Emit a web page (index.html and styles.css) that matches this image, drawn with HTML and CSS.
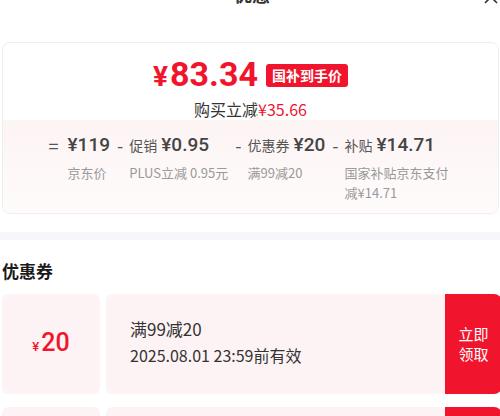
FILE: index.html
```html
<!DOCTYPE html>
<html>
  <head>
    <title>优惠</title>
    <link rel="stylesheet" href="styles.css">
  </head>
  <body>
    <header class="sheet-head">
      <h2>优惠</h2>
      <svg class="close" width="14" height="14" viewBox="0 0 14 14">
        <path d="M1 1 L13 13 M13 1 L1 13" stroke="#333" stroke-width="1.6" fill="none"/>
      </svg>
    </header>

    <div class="price-card">
      <div class="final">
        <div class="final-line">
          <span class="big-price"><span class="yen">¥</span>83.34</span>
          <span class="badge">国补到手价</span>
        </div>
        <div class="save">购买立减<span class="red">¥35.66</span></div>
      </div>
      <div class="breakdown">
        <div class="item">
          <span class="op">=</span>
          <div>
            <div class="top"><span class="amt">¥119</span></div>
            <div class="sub">京东价</div>
          </div>
        </div>
        <div class="item">
          <span class="op">-</span>
          <div>
            <div class="top"><span class="label">促销</span><span class="amt">¥0.95</span></div>
            <div class="sub">PLUS立减 0.95元</div>
          </div>
        </div>
        <div class="item">
          <span class="op">-</span>
          <div>
            <div class="top"><span class="label">优惠券</span><span class="amt">¥20</span></div>
            <div class="sub">满99减20</div>
          </div>
        </div>
        <div class="item">
          <span class="op">-</span>
          <div>
            <div class="top"><span class="label">补贴</span><span class="amt">¥14.71</span></div>
            <div class="sub wrap">国家补贴京东支付减¥14.71</div>
          </div>
        </div>
      </div>
    </div>

    <div class="divider"></div>

    <h3 class="section-title">优惠券</h3>

    <div class="coupon">
      <div class="coupon-value"><span class="yen">¥</span>20</div>
      <div class="coupon-info">
        <div class="rule">满99减20</div>
        <div class="expire">2025.08.01 23:59前有效</div>
      </div>
      <button class="get-btn">立即<br>领取</button>
    </div>
    <div class="coupon">
      <div class="coupon-value"><span class="yen">¥</span>10</div>
      <div class="coupon-info">
        <div class="rule">满59减10</div>
        <div class="expire">2025.08.01 23:59前有效</div>
      </div>
      <button class="get-btn">立即<br>领取</button>
    </div>
  </body>
</html>
```

FILE: styles.css
```css
* {
  margin: 0;
  padding: 0;
  box-sizing: border-box;
}

html, body {
  height: 100%;
  overflow: hidden;
}

body {
  font-family: 'Noto Sans CJK SC', 'Noto Sans', sans-serif;
  color: #333;
  background: #fff;
  padding-left: 2px;
  width: 502px;
}

.sheet-head {
  position: relative;
  height: 24px;
  margin-top: -18px;
  text-align: center;
}

.sheet-head h2 {
  font-size: 18px;
  line-height: 24px;
  font-weight: bold;
  color: #333;
}

.close {
  position: absolute;
  right: 4px;
  top: 8px;
}

.price-card {
  margin-top: 36px;
  width: 497px;
  border: 1px solid #eee;
  border-radius: 8px;
  overflow: hidden;
}

.final {
  padding-top: 12px;
  text-align: center;
}

.final-line {
  display: flex;
  align-items: center;
  justify-content: center;
  gap: 8px;
}

.big-price {
  font-family: 'Roboto', sans-serif;
  font-weight: bold;
  font-size: 34px;
  line-height: 38px;
  color: #f0152d;
}

.big-price .yen {
  font-size: 28px;
  margin-right: 2px;
}

.badge {
  background: #f0152d;
  color: #fff;
  font-size: 14px;
  font-weight: bold;
  line-height: 23px;
  padding: 0 6px;
  border-radius: 3px;
}

.save {
  font-size: 16px;
  line-height: 22px;
  margin-top: 2px;
  color: #333;
}

.red {
  color: #f0152d;
}

.breakdown {
  position: relative;
  background: linear-gradient(#fdf4f4, #fffbfb);
  display: flex;
  justify-content: center;
  gap: 7px;
  padding: 12px 0 16px;
  height: 93px;
}

.breakdown::before {
  content: '';
  position: absolute;
  top: -5px;
  left: 249px;
  border-left: 5px solid transparent;
  border-right: 5px solid transparent;
  border-bottom: 5px solid #fdf4f4;
}

.item {
  display: flex;
  align-items: flex-start;
}

.op {
  font-size: 18px;
  line-height: 26px;
  color: #555;
  margin-right: 6px;
}

.item:first-child .op {
  margin-right: 9px;
}

.top {
  display: flex;
  align-items: baseline;
  gap: 4px;
  line-height: 26px;
}

.label {
  font-size: 14px;
  color: #555;
}

.amt {
  font-family: 'Roboto', sans-serif;
  font-weight: 500;
  font-size: 19px;
  color: #444;
}

.sub {
  font-size: 13px;
  line-height: 20px;
  color: #999;
  margin-top: 5px;
}

.sub.wrap {
  width: 108px;
}

.divider {
  height: 8px;
  background: #f6f7fb;
  margin: 18px 0 0 -2px;
}

.section-title {
  font-size: 17px;
  font-weight: bold;
  color: #1a1a1a;
  line-height: 24px;
  margin: 19px 0 11px;
}

.coupon {
  display: flex;
  height: 100px;
  margin-bottom: 13px;
}

.coupon-value {
  width: 98px;
  background: #fdf3f4;
  border-radius: 6px;
  display: flex;
  align-items: baseline;
  justify-content: center;
  padding-top: 32px;
  color: #f0152d;
  font-family: 'Roboto', sans-serif;
  font-weight: 500;
  font-size: 25px;
  line-height: 34px;
}

.coupon-value .yen {
  font-size: 13px;
  margin-right: 2px;
}

.coupon-info {
  flex: 1;
  margin-left: 6px;
  background: #fdf3f4;
  border-radius: 6px 0 0 6px;
  padding: 22px 0 0 24px;
}

.rule {
  font-size: 17px;
  line-height: 26px;
}

.expire {
  font-size: 16px;
  line-height: 26px;
}

.get-btn {
  width: 57px;
  border: none;
  background: #f0152d;
  color: #fff;
  font-family: 'Noto Sans CJK SC', sans-serif;
  font-size: 15px;
  line-height: 20px;
  border-radius: 0 8px 8px 0;
}
```
